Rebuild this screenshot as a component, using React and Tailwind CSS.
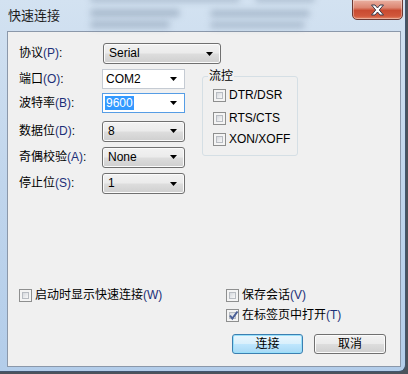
import React from "react";

const font = { fontFamily: '"Liberation Sans", "Noto Sans CJK SC", sans-serif' };

function Arrow() {
  return (
    <svg width="7" height="4" viewBox="0 0 7 4" className="shrink-0">
      <path d="M0 0h7L3.5 4z" fill="#000" />
    </svg>
  );
}

function DropButton({ value, className }) {
  return (
    <div
      className={`flex items-center justify-between h-[21px] pl-[5px] pr-[7px] rounded-[3px] border border-[#707070] bg-[linear-gradient(#f2f2f2_0%,#ebebeb_48%,#dddddd_52%,#cfcfcf_100%)] shadow-[inset_0_0_0_1px_#fbfbfb] ${className}`}
    >
      <span className="leading-[13px]">{value}</span>
      <Arrow />
    </div>
  );
}

function ComboBox({ value, selected, focused }) {
  return (
    <div
      className={`flex items-center justify-between w-[83px] h-[20px] pl-[2px] pr-[7px] bg-white border ${
        focused ? "border-[#569de5]" : "border-[#c5cbd3]"
      }`}
    >
      <span
        className={`leading-[14px] px-[1px] ${
          selected ? "bg-[#3399ff] text-white" : ""
        }`}
      >
        {value}
      </span>
      <Arrow />
    </div>
  );
}

function Check({ checked }) {
  return (
    <span className="relative flex w-[13px] h-[13px] shrink-0 border border-[#8e8f8f] bg-[#f4f4f4] p-[2px]">
      <span className="flex-1 border border-[#b8bcc2] bg-linear-to-br from-[#d6d9de] to-[#f8f8f8]" />
      {checked && (
        <svg
          width="11"
          height="11"
          viewBox="0 0 11 11"
          className="absolute left-[1px] top-[0px]"
        >
          <path
            d="M2 5.5l2.3 3L9.5 1.5"
            stroke="#4a5f97"
            strokeWidth="2"
            fill="none"
          />
        </svg>
      )}
    </span>
  );
}

function CheckRow({ checked, label, hot }) {
  return (
    <div className="flex items-center gap-[3px] h-[13px]">
      <Check checked={checked} />
      <span className="leading-[13px]">
        {label}
        <span className="text-[#1c2f78]">{hot}</span>
      </span>
    </div>
  );
}

function Label({ text, hot }) {
  return (
    <span className="w-[83px] shrink-0 leading-[13px]">
      {text}
      <span className="text-[#1c2f78]">{hot}</span>:
    </span>
  );
}

// blurry blobs seen through the glass frame
const blobs = [
  "left-[90px] top-[-4px] w-[150px] h-[6px]",
  "left-[255px] top-[-4px] w-[60px] h-[6px]",
  "left-[90px] top-[9px] w-[90px] h-[8px]",
  "left-[210px] top-[10px] w-[100px] h-[7px]",
  "left-[90px] top-[21px] w-[80px] h-[7px]",
  "left-[210px] top-[22px] w-[95px] h-[6px]",
];

export default function App() {
  return (
    <div
      className="w-[408px] h-[374px] bg-[#4b535c] overflow-hidden text-[12px] text-black"
      style={font}
    >
      <div className="relative w-[406px] h-[372px] rounded-br-[7px] border-r border-b border-[#42566f] bg-linear-to-b from-[#d3e2f1] via-[#c0d5ec] to-[#b3cdea] flex flex-col">
        {blobs.map((b) => (
          <div
            key={b}
            className={`absolute ${b} rounded-full bg-[#8194aa] blur-[3px] opacity-50`}
          />
        ))}

        {/* close button */}
        <div className="absolute left-[352px] top-[-1px] w-[51px] h-[21px] rounded-b-[5px] border border-[#6b3a34] bg-[linear-gradient(#eab1a2_0%,#dc8672_40%,#c94b31_55%,#d1583c_85%,#e58b6b_100%)] flex items-center justify-center shadow-[inset_0_0_0_1px_rgba(255,255,255,0.35)]">
          <svg width="15" height="12" viewBox="0 0 15 12">
            <path
              d="M1.5 1h3.5l2.5 3 2.5-3h3.5l-4.2 5 4.2 5h-3.5l-2.5-3-2.5 3H1.5l4.2-5z"
              fill="#fff"
              stroke="#3b3b4b"
              strokeWidth="1"
              strokeLinejoin="round"
            />
          </svg>
        </div>

        {/* title bar */}
        <div className="relative h-[31px] pl-[8px] pt-[8px] text-[13px] leading-[15px] text-[#1e1e1e]">
          快速连接
        </div>

        {/* client area */}
        <div className="ml-[7px] w-[394px] h-[336px] border border-[#8b98aa] bg-[#f0f0f0] flex flex-col pl-[11px] pr-[14px] pt-[11px] pb-[12px]">
          <div className="flex items-center h-[21px]">
            <Label text="协议" hot="(P)" />
            <DropButton value="Serial" className="w-[118px] ml-[1px]" />
          </div>

          <div className="flex mt-[5px]">
            <div className="flex flex-col">
              <div className="flex items-center h-[20px]">
                <Label text="端口" hot="(O)" />
                <ComboBox value="COM2" />
              </div>
              <div className="flex items-center h-[20px] mt-[4px]">
                <Label text="波特率" hot="(B)" />
                <ComboBox value="9600" selected focused />
              </div>
              <div className="flex items-center h-[20px] mt-[8px]">
                <Label text="数据位" hot="(D)" />
                <DropButton value="8" className="w-[83px] h-[20px]" />
              </div>
              <div className="flex items-center h-[20px] mt-[6px]">
                <Label text="奇偶校验" hot="(A)" />
                <DropButton value="None" className="w-[83px] h-[20px]" />
              </div>
              <div className="flex items-center h-[21px] mt-[6px]">
                <Label text="停止位" hot="(S)" />
                <DropButton value="1" className="w-[83px]" />
              </div>
            </div>

            <div className="relative ml-[17px] mt-[7px] w-[96px] h-[80px] rounded-[3px] border border-[#d5dfe5] pl-[10px] pt-[12px] flex flex-col">
              <span className="absolute left-[5px] top-[-8px] px-[1px] bg-[#f0f0f0] leading-[14px]">
                流控
              </span>
              <CheckRow label="DTR/DSR" />
              <div className="mt-[10px]">
                <CheckRow label="RTS/CTS" />
              </div>
              <div className="mt-[8px]">
                <CheckRow label="XON/XOFF" />
              </div>
            </div>
          </div>

          <div className="mt-auto flex">
            <div className="w-[207px]">
              <CheckRow label="启动时显示快速连接" hot="(W)" />
            </div>
            <div className="flex flex-col gap-[7px]">
              <CheckRow label="保存会话" hot="(V)" />
              <CheckRow checked label="在标签页中打开" hot="(T)" />
            </div>
          </div>

          <div className="flex justify-end gap-[11px] mt-[12px]">
            <button className="w-[71px] h-[20px] rounded-[3px] border border-[#3c7fb1] bg-[linear-gradient(#eaf6fd_0%,#d9f0fc_48%,#bee6fd_52%,#a7d9f5_100%)] shadow-[inset_0_0_0_1px_#98e0fa] leading-[14px]">
              连接
            </button>
            <button className="w-[72px] h-[20px] rounded-[3px] border border-[#707070] bg-[linear-gradient(#f2f2f2_0%,#ebebeb_48%,#dddddd_52%,#cfcfcf_100%)] shadow-[inset_0_0_0_1px_#fbfbfb] leading-[14px]">
              取消
            </button>
          </div>
        </div>
      </div>
    </div>
  );
}
